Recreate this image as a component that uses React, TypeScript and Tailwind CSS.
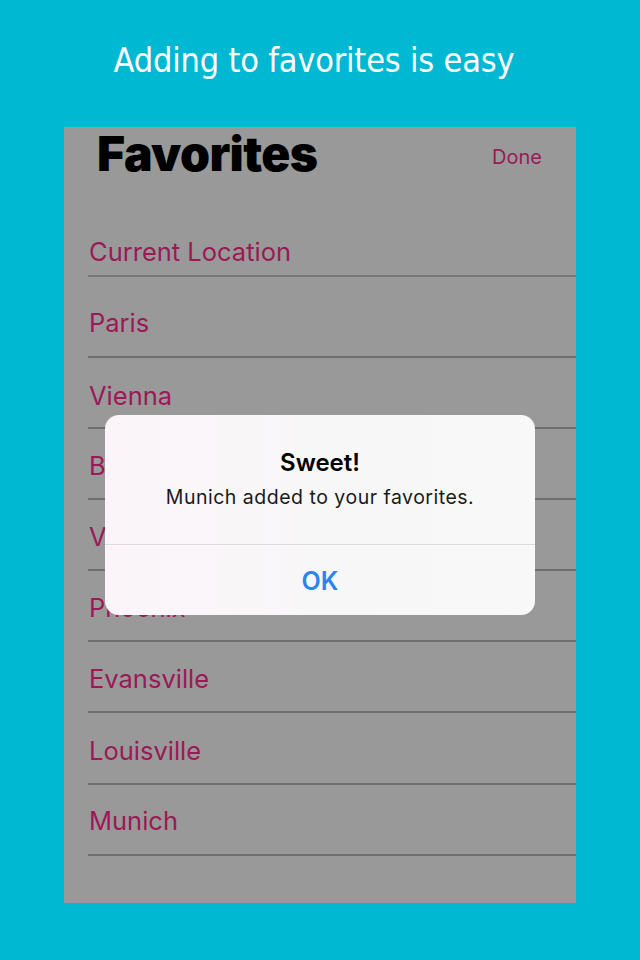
const cities = [
  { name: 'Paris', h: 'h-[81px] pt-[14px]' },
  { name: 'Vienna', h: 'h-[71px] pt-[7px]' },
  { name: 'Berlin', h: 'h-[71px] pt-[6px]' },
  { name: 'Vancouver', h: 'h-[71px] pt-[6px]' },
  { name: 'Phoenix', h: 'h-[71px] pt-[6px]' },
  { name: 'Evansville', h: 'h-[71px] pt-[6px]' },
  { name: 'Louisville', h: 'h-[72px] pt-[6px]' },
  { name: 'Munich', h: 'h-[71px] pt-[4px]' },
];

export default function App() {
  return (
    <div className="w-[640px] h-[960px] bg-[#00b8d2] flex flex-col items-center">
      <h1 className="mt-[37px] mr-[12px] h-[46px] text-white text-[34px] leading-[46px] font-['DejaVu_Sans',sans-serif] [font-stretch:condensed] tracking-[-0.2px]">
        Adding to favorites is easy
      </h1>

      <div className="relative mt-[44px] w-[512px] h-[776px] bg-[#999999] font-['Inter',sans-serif]">
        {/* header */}
        <div className="flex items-start justify-between pl-[33px] pr-[34px] h-[80px]">
          <h2 className="mt-[1px] text-[48px] leading-[52px] font-black text-black tracking-[-0.6px]">
            Favorites
          </h2>
          <button className="mt-[17px] text-[20px] leading-[26px] text-[#9b1a55]">Done</button>
        </div>

        {/* list */}
        <div className="ml-[24px]">
          <div className="h-[70px] pt-[22px] flex items-center border-b-2 border-[#777777] text-[25.5px] text-[#9b1a55] pl-px">
            Current Location
          </div>
          {cities.map((c) => (
            <div
              key={c.name}
              className={`${c.h} flex items-center border-b-2 border-[#6e6e6e] text-[25.5px] text-[#9b1a55] pl-px`}
            >
              {c.name}
            </div>
          ))}
        </div>

        {/* alert */}
        <div className="absolute left-[41px] top-[288px] w-[430px] h-[200px] rounded-[14px] bg-gradient-to-r from-[#fbf5f9] via-[#f8f7f8] to-[#f8f8f8] flex flex-col">
          <div className="h-[129px] flex flex-col items-center pt-[33px]">
            <p className="text-[24px] leading-[30px] font-semibold text-black">Sweet!</p>
            <p className="mt-[7px] text-[19.5px] leading-[24px] text-[#1a1a1a] tracking-[0.5px]">
              Munich added to your favorites.
            </p>
          </div>
          <div className="flex-1 border-t border-[#dedbde] flex items-center justify-center">
            <button className="text-[25px] font-semibold text-[#2a86ee] pt-[3px]">OK</button>
          </div>
        </div>
      </div>
    </div>
  );
}
